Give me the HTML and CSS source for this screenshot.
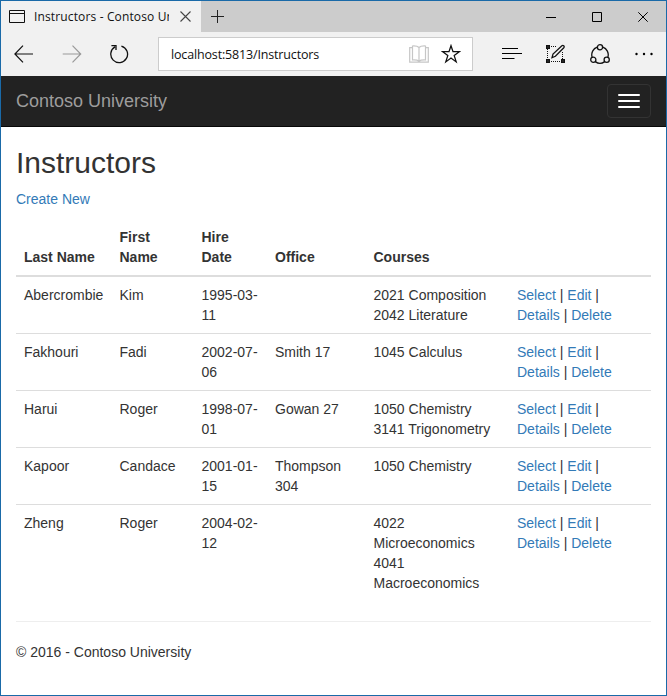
FILE: index.html
```html
<!DOCTYPE html>
<html lang="en">
<head>
<meta charset="utf-8">
<title>Instructors - Contoso University</title>
<link rel="stylesheet" href="styles.css">
</head>
<body>
<div class="window">
  <div class="titlebar">
    <div class="tab">
      <svg class="tab-icon" width="16" height="13" viewBox="0 0 16 13" fill="none" stroke="#111"><path d="M.5.5h15v12H.5zM1 3.5h14"/></svg>
      <span class="tab-title">Instructors - Contoso University</span>
      <svg class="tab-close" width="11" height="11" viewBox="0 0 11 11" fill="none" stroke="#444" stroke-width="1.1"><path d="M.5.5l10 10M10.5.5l-10 10"/></svg>
    </div>
    <svg class="new-tab" width="13" height="13" viewBox="0 0 13 13" stroke="#222"><path d="M6.5 0v13M0 6.5h13"/></svg>
    <div class="controls">
      <svg width="10" height="10" viewBox="0 0 10 10" stroke="#000"><path d="M0 5.5h10"/></svg>
      <svg width="10" height="10" viewBox="0 0 10 10" fill="none" stroke="#000"><path d="M.5.5h9v9h-9z"/></svg>
      <svg width="10" height="10" viewBox="0 0 10 10" stroke="#000"><path d="M.3.3l9.4 9.4M9.7.3L.3 9.7"/></svg>
    </div>
  </div>
  <div class="toolbar">
    <div class="nav-buttons">
      <svg width="20" height="18" viewBox="0 0 20 18" fill="none" stroke="#111" stroke-width="1.2"><path d="M9 .7L.9 9 9 17.3M.9 9H19"/></svg>
      <svg width="20" height="18" viewBox="0 0 20 18" fill="none" stroke="#999" stroke-width="1.2"><path d="M10.500 .7L18.700 9l-8.200 8.300M18.700 9H.7"/></svg>
      <svg class="reload" width="20" height="20" viewBox="0 0 20 20" fill="none" stroke="#111" stroke-width="1.3"><path d="M12.400 2.100A8.400 8.400 0 1 1 6 2.900M2.400 1.700H7v4.400"/></svg>
    </div>
    <div class="address">
      <span class="url">localhost:5813/Instructors</span>
      <svg class="book" width="20" height="19" viewBox="0 0 20 19" fill="none" stroke="#c6c6c6" stroke-width="1.2"><path d="M10 2.500C8.500 1 6.500.8 3.500 1v14c3-.2 5 0 6.500 1.300 1.500-1.300 3.500-1.500 6.500-1.300V1C13.500.8 11.500 1 10 2.500zM10 2.500v14M3.500 2.600H.7v14.600h18.600V2.600h-2.800"/></svg>
      <svg class="star" width="20" height="20" viewBox="0 0 20 20" fill="none" stroke="#111" stroke-width="1.3"><path d="M10 1.700l2 6h6.300l-5.100 3.900 2 6.300L10 14.100l-5.200 3.800 2-6.300L1.700 7.700H8z"/></svg>
    </div>
    <div class="tools">
      <svg width="20" height="20" viewBox="0 0 20 20" stroke="#000"><path d="M0 4.500h16M0 9.500h20M0 14.500h12.500"/></svg>
      <svg width="19" height="20" viewBox="0 0 19 20" fill="none" stroke="#111"><path stroke-dasharray="1 1" d="M5 2.500h6M1.500 5v10M5 17.500h10M16.500 8v7"/><path fill="#555" stroke-width="1.400" d="M.7 1.700h2.600v2.600H.7zM.7 15.700h2.600v2.600H.7zM15.700 15.700h2.600v2.600h-2.600z"/><path stroke-width="1.300" d="M6 13.600l1-3.600 8.900-8.300c1.200-1 3 .6 1.900 2L9.400 12.300z"/></svg>
      <svg class="share" width="20" height="20" viewBox="0 0 20 20" fill="none" stroke="#111" stroke-width="1.3"><path d="M7.200 3.200A8 8 0 0 0 2.100 13.100M12.800 3.200a8 8 0 0 1 5.100 9.900M5.300 17.600a8 8 0 0 0 9.400 0"/><circle cx="10" cy="3.300" r="2.600"/><circle cx="3.300" cy="15.700" r="2.600"/><circle cx="16.700" cy="15.700" r="2.600"/></svg>
      <svg width="20" height="20" viewBox="0 0 20 20"><circle cx="2.500" cy="10" r="1.200"/><circle cx="10" cy="10" r="1.200"/><circle cx="17.500" cy="10" r="1.200"/></svg>
    </div>
  </div>
  <nav class="navbar">
    <a class="brand">Contoso University</a>
    <div class="toggle"><i></i><i></i><i></i></div>
  </nav>
  <main class="content">
    <h2>Instructors</h2>
    <p><a>Create New</a></p>
    <table>
      <colgroup><col class="c-last"><col class="c-first"><col class="c-date"><col class="c-office"><col class="c-courses"><col></colgroup>
      <thead><tr><th>Last Name</th><th>First Name</th><th>Hire Date</th><th>Office</th><th>Courses</th><th></th></tr></thead>
      <tbody>
        <tr><td>Abercrombie</td><td>Kim</td><td>1995-03-11</td><td></td><td>2021 Composition<br>2042 Literature</td><td><a>Select</a> | <a>Edit</a> | <a>Details</a> | <a>Delete</a></td></tr>
        <tr><td>Fakhouri</td><td>Fadi</td><td>2002-07-06</td><td>Smith 17</td><td>1045 Calculus</td><td><a>Select</a> | <a>Edit</a> | <a>Details</a> | <a>Delete</a></td></tr>
        <tr><td>Harui</td><td>Roger</td><td>1998-07-01</td><td>Gowan 27</td><td>1050 Chemistry<br>3141 Trigonometry</td><td><a>Select</a> | <a>Edit</a> | <a>Details</a> | <a>Delete</a></td></tr>
        <tr><td>Kapoor</td><td>Candace</td><td>2001-01-15</td><td>Thompson 304</td><td>1050 Chemistry</td><td><a>Select</a> | <a>Edit</a> | <a>Details</a> | <a>Delete</a></td></tr>
        <tr><td>Zheng</td><td>Roger</td><td>2004-02-12</td><td></td><td>4022 Microeconomics<br>4041 Macroeconomics</td><td><a>Select</a> | <a>Edit</a> | <a>Details</a> | <a>Delete</a></td></tr>
      </tbody>
    </table>
    <hr>
    <footer>© 2016 - Contoso University</footer>
  </main>
</div>
</body>
</html>
```
FILE: styles.css
```css
* { box-sizing: border-box; }
body { margin: 0; font: 14px/20px "Liberation Sans", Arial, sans-serif; color: #333; background: #fff; }
svg { display: block; flex: none; }
.window { height: 696px; border: 1px solid #1a6aa8; overflow: hidden; }
.titlebar { display: flex; align-items: center; height: 31px; background: #ccc; }
.tab { display: flex; align-items: center; width: 200px; height: 31px; padding-left: 8px; background: #f1f1f1; }
.tab-title { width: 135px; margin-left: 9px; overflow: hidden; white-space: nowrap; font: 12px/18px "Open Sans", sans-serif; letter-spacing: .14px; color: #111; }
.tab-close { margin-left: 11px; }
.new-tab { margin-left: 10px; }
.controls { display: flex; gap: 36px; margin-left: auto; margin-right: 18px; }
.toolbar { display: flex; align-items: center; height: 44px; background: #f1f1f1; }
.nav-buttons { display: flex; align-items: center; gap: 28px; width: 157px; padding-left: 13px; }
.reload { margin-left: -1px; }
.address { display: flex; align-items: center; width: 315px; height: 34px; padding-left: 12px; border: 1px solid #ccc; background: #fff; }
.url { width: 238px; padding-top: 1px; font: 12.5px/18px "Open Sans", sans-serif; letter-spacing: -.16px; color: #111; }
.star { margin-left: 12px; }
.tools { display: flex; gap: 24px; margin-left: 29px; }
.share { margin-left: 1px; }
.navbar { display: flex; justify-content: space-between; align-items: center; height: 51px; padding: 0 15px; background: #222; border-bottom: 1px solid #080808; }
.brand { font-size: 18px; color: #9d9d9d; }
.toggle { display: flex; flex-direction: column; justify-content: center; gap: 4px; width: 44px; height: 34px; padding: 0 10px; border: 1px solid #333; border-radius: 4px; }
.toggle i { height: 2px; border-radius: 1px; background: #fff; }
.content { padding: 19px 15px 0; }
h2 { margin: 0 0 10px; font-size: 30px; font-weight: 500; line-height: 33px; }
p { margin: 0 0 10px; }
.content a { color: #337ab7; }
table { width: 635px; table-layout: fixed; border-collapse: separate; border-spacing: 0; }
.c-last { width: 95.5px; }
.c-first { width: 82px; }
.c-date { width: 73.5px; }
.c-office { width: 98.5px; }
.c-courses { width: 143.5px; }
th, td { padding: 8px; text-align: left; }
th { vertical-align: bottom; border-bottom: 2px solid #ddd; }
td { vertical-align: top; border-top: 1px solid #ddd; }
tbody tr:first-child td { border-top: 0; }
hr { margin: 20px 0; border: 0; border-top: 1px solid #eee; }
```
